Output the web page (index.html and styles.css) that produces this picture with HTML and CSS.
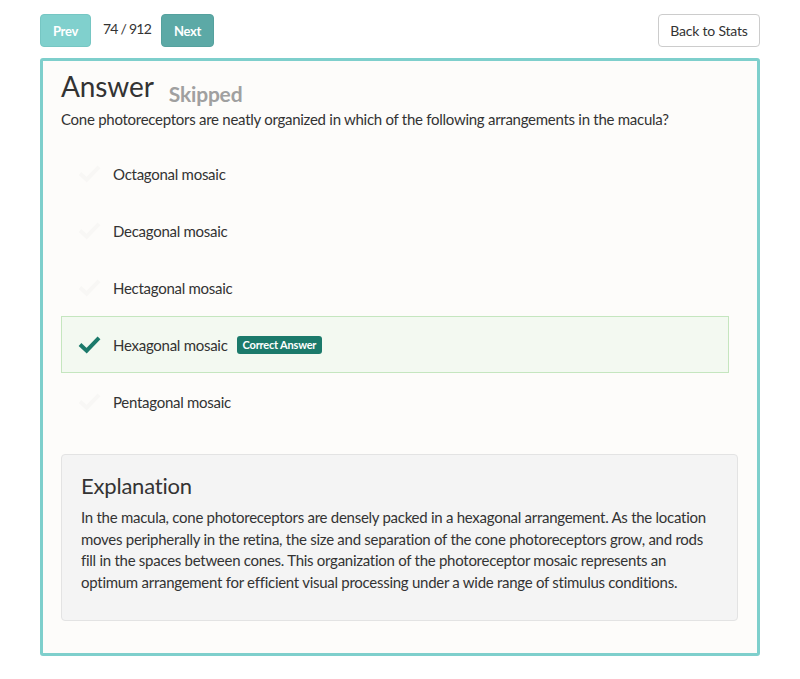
FILE: index.html
```html
<!DOCTYPE html>
<html>
<head>
<meta charset="utf-8">
<link rel="stylesheet" href="styles.css">
</head>
<body>
<div class="page">
  <div class="toolbar">
    <div class="nav">
      <button class="btn btn-prev">Prev</button>
      <span class="counter">74 / 912</span>
      <button class="btn btn-next">Next</button>
    </div>
    <button class="btn-back">Back to Stats</button>
  </div>
  <div class="card">
    <div class="title-row">
      <h2 class="title">Answer</h2>
      <span class="status">Skipped</span>
    </div>
    <p class="question">Cone photoreceptors are neatly organized in which of the following arrangements in the macula?</p>
    <ul class="options">
      <li class="option"><svg class="check faint" viewBox="0 0 24 20"><path d="M2 10 L9 16.5 L22 3" /></svg><span>Octagonal mosaic</span></li>
      <li class="option"><svg class="check faint" viewBox="0 0 24 20"><path d="M2 10 L9 16.5 L22 3" /></svg><span>Decagonal mosaic</span></li>
      <li class="option"><svg class="check faint" viewBox="0 0 24 20"><path d="M2 10 L9 16.5 L22 3" /></svg><span>Hectagonal mosaic</span></li>
      <li class="option correct"><svg class="check" viewBox="0 0 24 20"><path d="M2 10 L9 16.5 L22 3" /></svg><span>Hexagonal mosaic</span><span class="badge">Correct Answer</span></li>
      <li class="option"><svg class="check faint" viewBox="0 0 24 20"><path d="M2 10 L9 16.5 L22 3" /></svg><span>Pentagonal mosaic</span></li>
    </ul>
    <div class="explanation">
      <h3 class="exp-title">Explanation</h3>
      <p class="exp-text">In the macula, cone photoreceptors are densely packed in a hexagonal arrangement. As the location moves peripherally in the retina, the size and separation of the cone photoreceptors grow, and rods fill in the spaces between cones. This organization of the photoreceptor mosaic represents an optimum arrangement for efficient visual processing under a wide range of stimulus conditions.</p>
    </div>
  </div>
</div>
</body>
</html>
```

FILE: styles.css
```css
* { box-sizing: border-box; }
body {
  margin: 0;
  background: #ffffff;
  font-family: Lato, "Open Sans", sans-serif;
  color: #333;
}
.page {
  width: 720px;
  margin: 0 0 0 40px;
  padding-top: 14px;
}
.toolbar {
  display: flex;
  justify-content: space-between;
  align-items: center;
  height: 33px;
}
.nav {
  display: flex;
  align-items: center;
  gap: 10px;
}
.btn {
  height: 33px;
  border: 1px solid transparent;
  border-radius: 4px;
  color: #fff;
  font-family: Lato, sans-serif;
  font-weight: bold;
  font-size: 13px;
  letter-spacing: -0.3px;
  padding: 0 9px;
}
.btn-prev { background: #80d0cd; border-color: #76c6c3; width: 51px; }
.btn-next { background: #5ca9a6; border-color: #55a19e; width: 53px; }
.counter {
  font-size: 14px;
  color: #333;
  margin: 0 0 4px 2px;
  letter-spacing: -0.75px;
}
.btn-back {
  height: 33px;
  width: 102px;
  background: #fff;
  border: 1px solid #ccc;
  border-radius: 4px;
  font-family: Lato, sans-serif;
  font-size: 14px;
  letter-spacing: -0.2px;
  color: #333;
  padding: 0;
}
.card {
  margin-top: 11px;
  border: 3px solid #7ecfcc;
  border-radius: 3px;
  background: #fdfcfa;
  padding: 8px 19px 32px 18px;
}
.title-row {
  display: flex;
  align-items: baseline;
}
.title {
  margin: 0;
  font-size: 28px;
  font-weight: normal;
  line-height: 34px;
  letter-spacing: -0.1px;
  color: #333;
}
.status {
  margin-left: 15px;
  font-size: 21px;
  font-weight: bold;
  letter-spacing: -0.2px;
  color: #a0a0a0;
  position: relative;
  top: 5px;
}
.question {
  margin: 6px 0 16px;
  font-size: 15px;
  line-height: 20px;
  letter-spacing: -0.27px;
}
.options {
  list-style: none;
  margin: 0 9px 24px 0;
  padding: 0;
}
.option {
  display: flex;
  align-items: center;
  height: 57px;
  border: 1px solid transparent;
  padding-left: 16px;
  font-size: 15px;
  letter-spacing: -0.27px;
  color: #333;
}
.option.correct {
  background: #f3f9f1;
  border-color: #c5e6bf;
}
.check {
  width: 23px;
  height: 19px;
  margin-right: 12px;
  fill: none;
  stroke: #1b7a6b;
  stroke-width: 4.2;
}
.check.faint { stroke: #f8f7f5; }
.badge {
  margin-left: 9px;
  background: #1b7a6b;
  color: #fff;
  font-size: 11px;
  font-weight: bold;
  letter-spacing: -0.2px;
  padding: 3px 6px;
  border-radius: 3px;
  line-height: 12px;
}
.explanation {
  background: #f4f4f4;
  border: 1px solid #e3e3e3;
  border-radius: 4px;
  padding: 17px 19px 27px;
}
.exp-title {
  margin: 0 0 7px;
  font-size: 22px;
  font-weight: normal;
  line-height: 28px;
  letter-spacing: -0.2px;
}
.exp-text {
  margin: 0;
  font-size: 15px;
  line-height: 21.5px;
  letter-spacing: -0.27px;
}
```
